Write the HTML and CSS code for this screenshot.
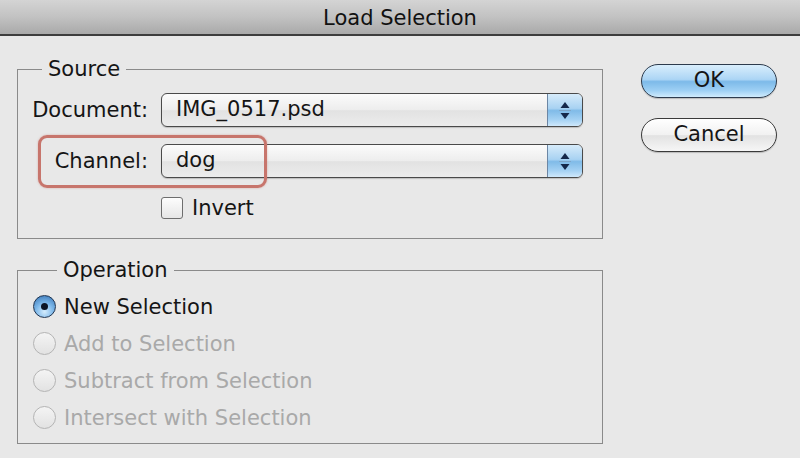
FILE: index.html
```html
<!DOCTYPE html>
<html>
<head>
<meta charset="utf-8">
<title>Load Selection</title>
<link rel="stylesheet" href="styles.css">
</head>
<body>
<div class="window">
  <div class="titlebar">Load Selection</div>
  <div class="content">
    <div class="left">
      <fieldset class="group source">
        <legend>Source</legend>
        <div class="row">
          <span class="label">Document:</span>
          <div class="popup">
            <span class="popup-value">IMG_0517.psd</span>
            <span class="stepper"><svg width="34" height="32" viewBox="0 0 34 32"><polygon points="17,8 12.5,14 21.5,14" fill="#15284a"/><line x1="11" y1="16.5" x2="23" y2="16.5" stroke="#7fa6c8" stroke-width="1"/><polygon points="12.5,19 21.5,19 17,25" fill="#15284a"/></svg></span>
          </div>
        </div>
        <div class="row row-channel">
          <span class="label">Channel:</span>
          <div class="popup">
            <span class="popup-value">dog</span>
            <span class="stepper"><svg width="34" height="32" viewBox="0 0 34 32"><polygon points="17,8 12.5,14 21.5,14" fill="#15284a"/><line x1="11" y1="16.5" x2="23" y2="16.5" stroke="#7fa6c8" stroke-width="1"/><polygon points="12.5,19 21.5,19 17,25" fill="#15284a"/></svg></span>
          </div>
          <span class="highlight"></span>
        </div>
        <div class="check-row">
          <span class="checkbox"></span>
          <span class="check-label">Invert</span>
        </div>
      </fieldset>
      <fieldset class="group operation">
        <legend>Operation</legend>
        <div class="radio-row">
          <span class="radio selected"><span class="dot"></span></span>
          <span class="radio-label">New Selection</span>
        </div>
        <div class="radio-row disabled">
          <span class="radio"></span>
          <span class="radio-label">Add to Selection</span>
        </div>
        <div class="radio-row disabled">
          <span class="radio"></span>
          <span class="radio-label">Subtract from Selection</span>
        </div>
        <div class="radio-row disabled">
          <span class="radio"></span>
          <span class="radio-label">Intersect with Selection</span>
        </div>
      </fieldset>
    </div>
    <div class="buttons">
      <div class="btn btn-default">OK</div>
      <div class="btn">Cancel</div>
    </div>
  </div>
</div>
</body>
</html>
```
FILE: styles.css
```css
html, body {
  margin: 0;
  padding: 0;
}
body {
  width: 800px;
  height: 458px;
  overflow: hidden;
  background: #e8e8e8;
  font-family: "DejaVu Sans", "Liberation Sans", sans-serif;
  font-size: 21px;
  color: #151515;
}
.window {
  width: 800px;
  height: 458px;
}
.titlebar {
  box-sizing: border-box;
  height: 36px;
  line-height: 36px;
  text-align: center;
  background: linear-gradient(#d4d4d4, #c2c2c2 50%, #a9a9a9);
  border-bottom: 2px solid #3d3d3d;
  color: #111;
  font-size: 21px;
}
.content {
  display: flex;
  gap: 38px;
  padding: 21px 0 0 17px;
}
.left {
  width: 586px;
  display: flex;
  flex-direction: column;
  gap: 19px;
}
.group {
  margin: 0;
  border: 1px solid #8a8a8a;
  padding: 0;
  min-width: 0;
}
.group legend {
  margin-left: 24px;
  padding: 0 6px;
  line-height: 24px;
  height: 24px;
}
.source {
  padding: 12px 19px 18px 0;
}
.row {
  display: flex;
  align-items: center;
  gap: 13px;
  position: relative;
}
.row + .row {
  margin-top: 17px;
}
.label {
  width: 130px;
  text-align: right;
}
.popup {
  width: 422px;
  height: 34px;
  box-sizing: border-box;
  border: 1px solid #4a4a4a;
  border-radius: 6px;
  display: flex;
  background: linear-gradient(#fbfbfb, #ededed 50%, #e2e2e2 52%, #ececec);
  box-shadow: 0 1px 1px rgba(0, 0, 0, 0.18);
  overflow: hidden;
}
.popup-value {
  flex: 1;
  padding-left: 14px;
  line-height: 31px;
}
.stepper {
  width: 34px;
  border-left: 1px solid #6c86a4;
  background: linear-gradient(#d6ebfa, #a8d2f2 45%, #80bbe8 52%, #a4d1f3 80%, #cfe8fb);
  display: flex;
  align-items: center;
  justify-content: center;
}
.highlight {
  position: absolute;
  left: 20px;
  top: -9px;
  width: 229px;
  height: 53px;
  box-sizing: border-box;
  border: 3px solid #c7756c;
  border-radius: 9px;
  box-shadow: 0 0 2px rgba(200, 100, 90, 0.5);
  pointer-events: none;
}
.check-row {
  display: flex;
  align-items: center;
  gap: 9px;
  margin-top: 18px;
  padding-left: 143px;
}
.checkbox {
  width: 22px;
  height: 22px;
  box-sizing: border-box;
  border: 1px solid #6e6e6e;
  border-radius: 3px;
  background: linear-gradient(#fdfdfd, #e6e6e6);
}
.operation {
  padding: 6px 0 7px 15px;
}
.radio-row {
  display: flex;
  align-items: center;
  gap: 8px;
  height: 37px;
}
.radio {
  width: 23px;
  height: 23px;
  box-sizing: border-box;
  border-radius: 50%;
  border: 1px solid #b4b4b4;
  background: linear-gradient(#f4f4f4, #e2e2e2);
  display: flex;
  align-items: center;
  justify-content: center;
}
.radio.selected {
  border: 1.5px solid #223550;
  background: radial-gradient(circle at 50% 75%, #d4ecfd 0%, #7fb9ea 45%, #2f6fb2 100%);
}
.dot {
  width: 7px;
  height: 7px;
  border-radius: 50%;
  background: #0c1424;
}
.disabled .radio-label {
  color: #a9a9a9;
}
.buttons {
  display: flex;
  flex-direction: column;
  gap: 20px;
  padding-top: 7px;
}
.btn {
  width: 136px;
  height: 34px;
  box-sizing: border-box;
  border: 1px solid #3a3a3a;
  border-radius: 17px;
  text-align: center;
  line-height: 31px;
  background: linear-gradient(#ffffff, #f1f1f1 50%, #e2e2e2 52%, #f6f6f6);
  box-shadow: 0 1px 1px rgba(0, 0, 0, 0.2);
}
.btn-default {
  border-color: #2d3b4d;
  background: linear-gradient(#d9eefc, #acd5f5 45%, #7dbae9 52%, #9ed0f4 80%, #d0ebfc);
}
```
